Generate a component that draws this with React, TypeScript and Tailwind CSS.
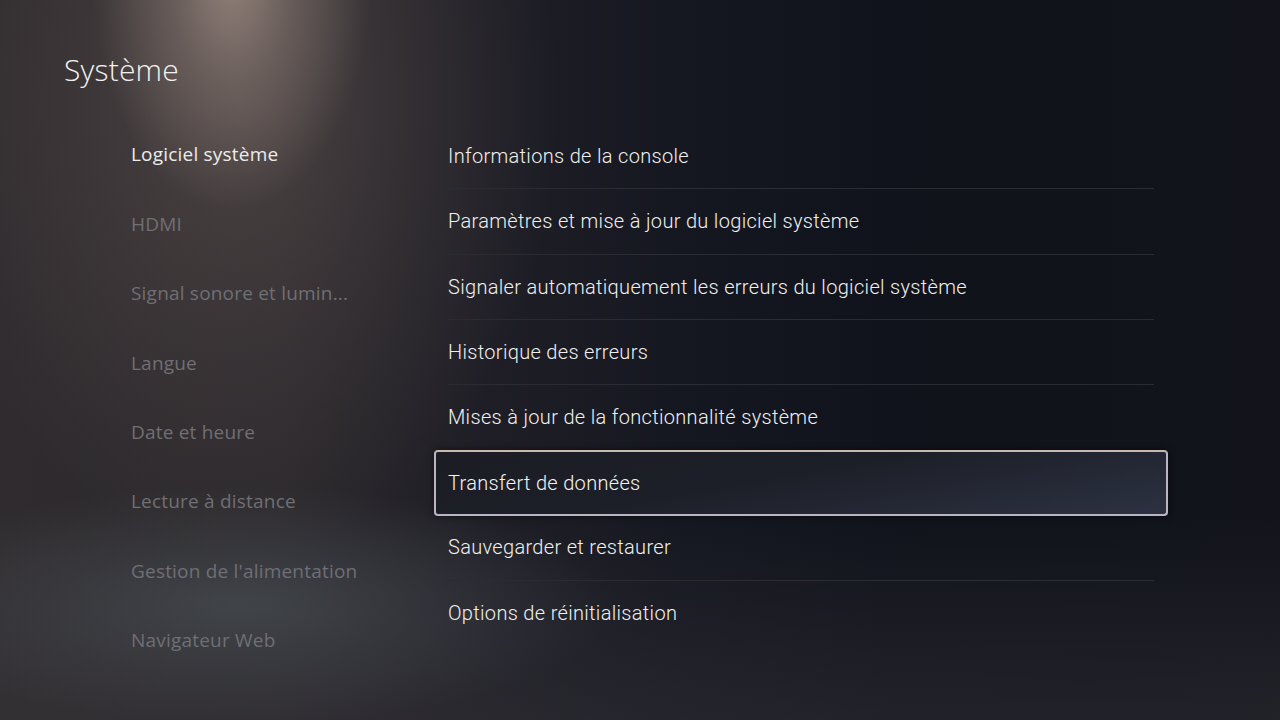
const categories = [
  'Logiciel système',
  'HDMI',
  'Signal sonore et lumin...',
  'Langue',
  'Date et heure',
  'Lecture à distance',
  "Gestion de l'alimentation",
  'Navigateur Web',
];

const options = [
  'Informations de la console',
  'Paramètres et mise à jour du logiciel système',
  'Signaler automatiquement les erreurs du logiciel système',
  'Historique des erreurs',
  'Mises à jour de la fonctionnalité système',
  'Transfert de données',
  'Sauvegarder et restaurer',
  'Options de réinitialisation',
];

const FOCUSED = 5;

export default function App() {
  return (
    <main
      className="w-[1280px] h-[720px] overflow-hidden text-white font-['Open_Sans',sans-serif]
        bg-[radial-gradient(ellipse_140px_230px_at_232px_-20px,rgba(170,150,140,0.75)_0%,rgba(170,150,140,0.35)_45%,rgba(170,150,140,0)_100%),radial-gradient(ellipse_320px_460px_at_240px_100px,rgba(100,88,85,0.55)_0%,rgba(100,88,85,0.25)_50%,rgba(100,88,85,0)_100%),radial-gradient(ellipse_380px_120px_at_240px_605px,rgba(82,92,98,0.5),rgba(82,92,98,0)_100%),linear-gradient(0deg,rgba(58,56,62,0.4)_0%,rgba(58,56,62,0)_28%),linear-gradient(90deg,#2f2b2e_0%,#2b282c_22%,#1f1e26_38%,#161821_52%,#11131c_70%,#12131b_100%)]"
    >
      {/* Header */}
      <header className="pl-[64px] pt-[49px] h-[120px]">
        <h1 className="text-[30px] leading-[42px] font-light text-[#f2f2f2] tracking-[0.2px]">
          Système
        </h1>
      </header>

      <div className="flex">
        {/* Categories */}
        <nav className="w-[434px] pl-[131px]">
          <ul>
            {categories.map((c, i) => (
              <li
                key={c}
                className={`h-[69.4px] flex items-center text-[19px] font-normal tracking-[0.2px] ${
                  i === 0 ? 'text-[#ececec]' : 'text-[#6f6f74]'
                }`}
              >
                {c}
              </li>
            ))}
          </ul>
        </nav>

        {/* Options */}
        <section className="w-[734px] pt-[4px]">
          <ul>
            {options.map((o, i) => {
              const focused = i === FOCUSED;
              const noLine = focused || i === FOCUSED - 1 || i === options.length - 1;
              return (
                <li key={o} className="h-[65.3px]">
                  {focused ? (
                    <div className="h-[66px] -mt-[0.5px] rounded-[4px] border-2 border-[#b9b5c3] border-t-[#c9b8ad] bg-[linear-gradient(170deg,#1b1c24_0%,#1d1f28_45%,#2c3242_100%)] pl-[12px] flex items-center shadow-[0_0_6px_rgba(0,0,0,0.5)]">
                      <span className="text-[20px] font-light font-['Roboto',sans-serif] text-[#f4f4f4] tracking-[0.32px]">
                        {o}
                      </span>
                    </div>
                  ) : (
                    <div className="mx-[14px] h-full flex items-center">
                      <div
                        className={`w-full h-full flex items-center border-b ${
                          noLine ? 'border-transparent' : 'border-[#2a2b33]'
                        }`}
                      >
                        <span className="text-[20px] font-light font-['Roboto',sans-serif] text-[#f0f0f0] tracking-[0.32px]">
                          {o}
                        </span>
                      </div>
                    </div>
                  )}
                </li>
              );
            })}
          </ul>
        </section>
      </div>
    </main>
  );
}
